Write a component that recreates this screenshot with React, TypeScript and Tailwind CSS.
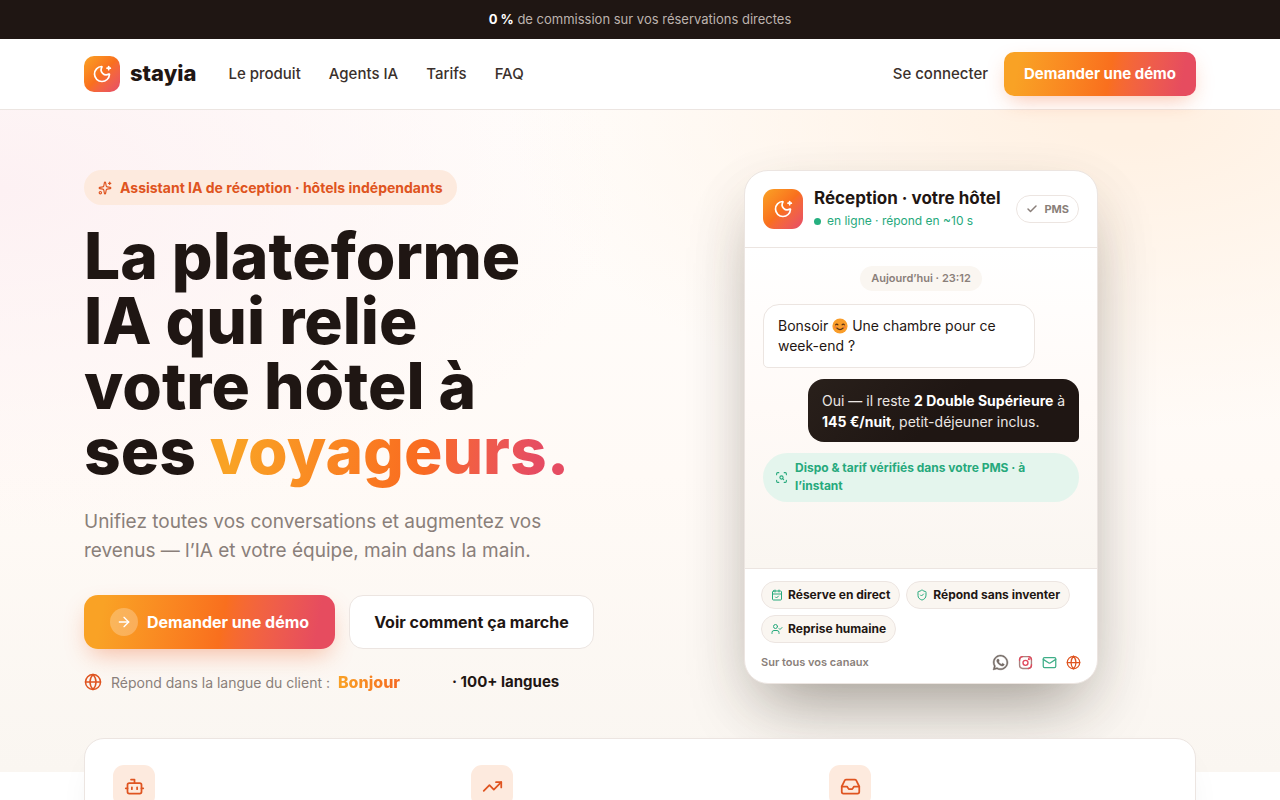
import React from "react";
import {
  ArrowRight, Bot, CalendarCheck, Check, Globe, Inbox, Mail,
  MoonStar, ScanSearch, ShieldCheck, Sparkles, TrendingUp, UserCheck,
} from "lucide-react";
import { FaWhatsapp } from "react-icons/fa6";

const navLinks = ["Le produit", "Agents IA", "Tarifs", "FAQ"];

const chips = [
  { label: "Réserve en direct", Icon: CalendarCheck },
  { label: "Répond sans inventer", Icon: ShieldCheck },
  { label: "Reprise humaine", Icon: UserCheck },
];

const features = [
  { id: "agent", Icon: Bot },
  { id: "growth", Icon: TrendingUp },
  { id: "inbox", Icon: Inbox },
];

function SmileFace() {
  return (
    <svg viewBox="0 0 16 16" className="inline-block size-4 align-[-3px]" aria-hidden="true">
      <circle cx="8" cy="8" r="7.6" fill="#f99d2a" />
      <path d="M3.6 6.9q1.2-1.6 2.4 0M10 6.9q1.2-1.6 2.4 0M4.8 10q3.2 3.2 6.4 0" fill="none" stroke="#5b3216" strokeWidth="1.1" strokeLinecap="round" />
      <circle cx="3.4" cy="9.2" r="1.1" fill="#f4664a" opacity=".6" />
      <circle cx="12.6" cy="9.2" r="1.1" fill="#f4664a" opacity=".6" />
    </svg>
  );
}

function InstagramMark() {
  return (
    <svg viewBox="0 0 24 24" className="size-[15px]" fill="none" strokeWidth="2.2" strokeLinecap="round" aria-hidden="true">
      <rect x="2.5" y="2.5" width="19" height="19" rx="5" stroke="#a88480" />
      <path d="M2.5 8.5v-1a5 5 0 0 1 5-5M21.5 15.5v1a5 5 0 0 1-5 5M16.5 2.5a5 5 0 0 1 5 5" stroke="#e2495c" />
      <circle cx="12" cy="12.5" r="4" stroke="#e2495c" />
      <path d="M17.4 6.6h.01" stroke="#e2495c" strokeWidth="3.4" />
    </svg>
  );
}

function Header() {
  return (
    <header className="relative z-10 border-b border-[#ece5e1] bg-white">
      <div className="mx-auto flex h-[70px] max-w-[1160px] items-center px-6">
        <a href="#" className="flex items-center gap-2.5">
          <span className="grid size-9 place-items-center rounded-[10px] bg-linear-135 from-[#f9a225] via-[#f96f1e] to-[#e64c66] text-white">
            <MoonStar size={20} strokeWidth={2} />
          </span>
          <span className="pb-0.5 text-[22px] leading-7 font-extrabold">stayia</span>
        </a>
        <nav className="ml-8 flex gap-7 text-[15px] font-medium text-[#3a302c]">
          {navLinks.map((l) => (
            <a key={l} href="#">{l}</a>
          ))}
        </nav>
        <div className="ml-auto flex items-center gap-4">
          <a href="#" className="text-[15px] font-medium text-[#3a302c]">Se connecter</a>
          <button className="h-11 rounded-[10px] bg-linear-100 from-[#f9a225] from-8% via-[#f96f1e] via-55% to-[#e64c5f] to-92% px-5 text-[15px] font-bold text-white shadow-[0_8px_22px_-6px_rgba(240,90,30,0.4)]">
            Demander une démo
          </button>
        </div>
      </div>
    </header>
  );
}

function Pitch() {
  return (
    <div>
      <div className="flex h-[35px] w-fit items-center gap-2 rounded-full bg-[#fdeade] px-3.5 text-[14px] font-bold whitespace-nowrap text-[#df5420]">
        <Sparkles size={14} />
        Assistant IA de réception · hôtels indépendants
      </div>
      <h1 className="mt-[18px] text-[64px] leading-[65px] font-extrabold whitespace-nowrap">
        La plateforme
        <br />
        IA qui relie
        <br />
        votre hôtel à
        <br />
        ses{" "}
        <span className="bg-linear-100 from-[#f9a225] from-8% via-[#f96a20] via-60% to-[#e64c62] to-90% bg-clip-text text-transparent">
          voyageurs.
        </span>
      </h1>
      <p className="mt-6 max-w-[480px] text-[19px] leading-[29px] text-[#8a7f7a]">
        Unifiez toutes vos conversations et augmentez vos revenus — l’IA et votre équipe, main dans la main.
      </p>
      <div className="mt-[30px] flex gap-3.5">
        <button className="flex h-[54px] items-center gap-[9px] rounded-[14px] bg-linear-100 from-[#f9a225] from-8% via-[#f96f1e] via-55% to-[#e64c5f] to-92% px-[26px] text-[16px] font-bold whitespace-nowrap text-white shadow-[0_10px_24px_-6px_rgba(240,90,30,0.4)]">
          <span className="grid size-7 place-items-center rounded-full bg-white/25">
            <ArrowRight size={16} />
          </span>
          Demander une démo
        </button>
        <button className="h-[54px] rounded-[14px] border border-[#ece5e1] bg-white px-6 text-[16px] font-bold whitespace-nowrap">
          Voir comment ça marche
        </button>
      </div>
      <div className="mt-[23px] flex h-5 items-center text-[14px] whitespace-nowrap text-[#8a7f7a]">
        <Globe size={18} className="mr-[9px] text-[#df5420]" />
        Répond dans la langue du client :
        <span className="ml-2 w-[114px] text-[16px] font-extrabold">
          <span className="bg-linear-90 from-[#f9a225] to-[#f4661f] bg-clip-text text-transparent">Bonjour</span>
        </span>
        <strong className="text-[15px] font-bold text-[#1f1613]">· 100+ langues</strong>
      </div>
    </div>
  );
}

function Conversation() {
  return (
    <section
      aria-label="Conversation"
      className="mx-auto flex w-full max-w-[354px] flex-col overflow-hidden rounded-3xl border border-[#ece5e1] bg-white shadow-[0_34px_70px_-20px_rgba(40,34,24,0.42),0_20px_60px_rgba(90,75,50,0.08)]"
    >
      <div className="flex items-center border-b border-[#ece5e1] p-[18px]">
        <span className="grid size-10 shrink-0 place-items-center rounded-[11px] bg-linear-135 from-[#f9a225] via-[#f96f1e] to-[#e64c66] text-white">
          <MoonStar size={20} />
        </span>
        <div className="-my-1 ml-[11px] whitespace-nowrap">
          <div className="text-[17px] leading-6 font-bold">Réception · votre hôtel</div>
          <div className="flex items-center gap-1.5 text-[12px] leading-[22px] text-[#26a97c]">
            <span className="size-[7px] rounded-full bg-[#26b080]" />
            en ligne · répond en ~10 s
          </div>
        </div>
        <span className="ml-auto flex h-7 items-center gap-1.5 rounded-full border border-[#ece5e1] px-[9px] text-[11px] font-bold text-[#8a7f7a]">
          <Check size={12} strokeWidth={3} />
          PMS
        </span>
      </div>

      <div className="flex min-h-[320px] flex-col gap-[11px] bg-linear-to-b from-white via-[#fffaf7] to-[#faf6f1] p-[18px] text-[14px]">
        <div className="mb-0.5 self-center rounded-full bg-[#faf6f1] px-[11px] py-1 text-[11px] leading-[17px] font-semibold text-[#8a7f7a]">
          Aujourd’hui · 23:12
        </div>
        <div className="w-[272px] rounded-2xl rounded-bl-[5px] border border-[#ece5e1] bg-white px-3.5 py-[11px] leading-5">
          Bonsoir <SmileFace /> Une chambre pour ce week-end ?
        </div>
        <div className="w-[271px] self-end rounded-2xl rounded-br-[5px] bg-linear-135 from-[#29201b] to-[#1f1613] to-50% pt-[11px] pr-2 pb-2.5 pl-3.5 leading-[21px] text-[#ece7e4]">
          Oui — il reste <strong className="font-bold text-white">2 Double Supérieure</strong> à{" "}
          <strong className="font-bold text-white">145 €/nuit</strong>, petit-déjeuner inclus.
        </div>
        <div className="flex items-center gap-[7px] rounded-full bg-[#e4f5ed] px-3 pt-1.5 pb-[7px] text-[12px] leading-[18px] font-bold text-[#26a97c]">
          <ScanSearch size={13} className="shrink-0" />
          <span className="max-w-[250px]">Dispo &amp; tarif vérifiés dans votre PMS · à l’instant</span>
        </div>
      </div>

      <div className="border-t border-[#ece5e1] px-4 py-3">
        <div className="flex flex-wrap gap-1.5">
          {chips.map(({ label, Icon }) => (
            <span key={label} className="flex h-7 items-center gap-[5px] rounded-full border border-[#ece5e1] bg-[#faf6f1] px-[9px] text-[12px] font-bold whitespace-nowrap">
              <Icon size={12} className="text-[#26a97c]" />
              {label}
            </span>
          ))}
        </div>
        <div className="mt-2.5 flex h-[18px] items-center justify-between text-[11px] font-semibold text-[#8a7f7a]">
          Sur tous vos canaux
          <span className="flex items-center gap-[9px]">
            <FaWhatsapp size={17} color="#756b66" stroke="#756b66" strokeWidth={14} />
            <InstagramMark />
            <Mail size={15} color="#3fae88" />
            <Globe size={15} color="#df5420" />
          </span>
        </div>
      </div>
    </section>
  );
}

export default function App() {
  return (
    <div className="bg-white font-[Inter,'Liberation_Sans',sans-serif] text-[#1f1613]">
      <div className="bg-[#1f1613] px-6 py-[10px] text-center text-[13px] leading-[19px] text-[#bdb3ae]">
        <strong className="font-bold text-white">0 %</strong> de commission sur vos réservations directes
      </div>
      <Header />
      <main>
        <section className="bg-[radial-gradient(620px_320px_at_88%_0%,#fff1e3_10%,transparent_100%),radial-gradient(620px_340px_at_0%_12%,#fdf1f3_0%,transparent_100%),linear-gradient(180deg,#fffdfb_0%,#fffaf6_55%,#faf6f1_100%)] pt-[60px] pb-20">
          <div className="mx-auto grid max-w-[1160px] grid-cols-[minmax(0,510px)_minmax(0,1fr)] items-start gap-[52px] px-6">
            <Pitch />
            <Conversation />
          </div>
        </section>
        <div className="relative mx-auto -mt-[34px] max-w-[1160px] px-6">
          <div className="grid grid-cols-3 gap-5 rounded-[20px] border border-[#ece5e1] bg-white px-7 py-[26px] shadow-[0_16px_40px_-20px_rgba(40,28,20,0.15)]">
            {features.map(({ id, Icon }) => (
              <span key={id} className="grid size-[42px] place-items-center rounded-[11px] bg-[#fdeade] text-[#df5420]">
                <Icon size={21} />
              </span>
            ))}
          </div>
        </div>
      </main>
    </div>
  );
}
